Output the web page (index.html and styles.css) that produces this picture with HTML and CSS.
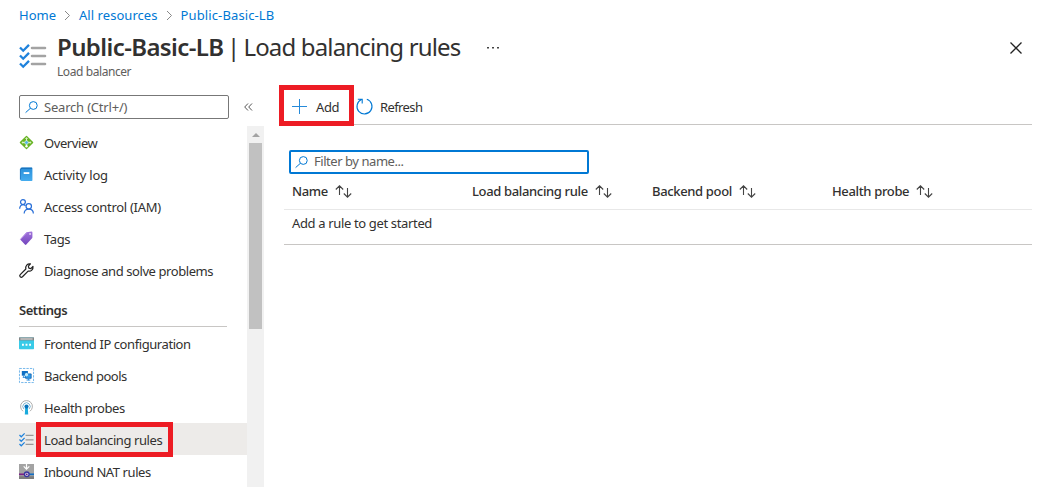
FILE: index.html
```html
<!DOCTYPE html>
<html lang="en">
<head>
<meta charset="utf-8">
<title>Public-Basic-LB | Load balancing rules</title>
<link rel="stylesheet" href="styles.css">
</head>
<body>
<nav class="breadcrumb">
  <a class="crumb crumb-home">Home</a>
  <svg class="chev" viewBox="0 0 7 11"><path d="M1 1l4.500 4.500L1 10"/></svg>
  <a class="crumb crumb-all">All resources</a>
  <svg class="chev" viewBox="0 0 7 11"><path d="M1 1l4.500 4.500L1 10"/></svg>
  <a class="crumb">Public-Basic-LB</a>
</nav>
<header class="header">
  <svg class="header-icon" viewBox="0 0 28 26"><g stroke="#a3a3a3" stroke-width="2.600" stroke-linecap="round"><path d="M13 5h13M13 13h13M13 21h13"/></g><g fill="none" stroke="#1f82dc" stroke-width="2.300"><path d="M1 4.500l3.200 3.200 5.800-5.800M1 12.500l3.200 3.200 5.800-5.800M1 20.500l3.200 3.200 5.800-5.800"/></g></svg>
  <div class="heading">
    <h1 class="title"><b class="title-name">Public-Basic-LB</b><span class="title-bar">|</span><span class="title-page">Load balancing rules</span></h1>
    <p class="subtitle">Load balancer</p>
  </div>
  <svg class="more" viewBox="0 0 12 3"><path fill="#444" d="M0 1h2v1.500H0zM5 1h2v1.500H5zM10 1h2v1.500h-2z"/></svg>
  <svg class="close" viewBox="0 0 12 12"><path d="M.5.5l11 11M11.500.5l-11 11"/></svg>
</header>
<div class="body">
  <aside class="sidebar">
    <div class="search-row">
      <div class="field search"><svg class="mag" viewBox="0 0 13 12"><circle cx="8.300" cy="4.500" r="3.900"/><path d="M5.400 7.300L.6 11.600"/></svg><span class="search-text">Search (Ctrl+/)</span></div>
      <svg class="collapse" viewBox="0 0 9 8"><path d="M4 .5L.7 4 4 7.500M8 .5L4.700 4 8 7.500"/></svg>
    </div>
    <div class="menu-wrap">
      <div class="menu">
        <a class="item"><svg class="ico" viewBox="0 0 16 16"><rect x="2.700" y="2.700" width="10.600" height="10.600" rx=".7" transform="rotate(45 8 8)" fill="#67b324"/><path d="M8 3v9M4 8h8" stroke="#e4f5d4" stroke-width="1"/><path d="M6.300 4.300L8 2.300l1.700 2M4.500 6.300L2.600 8l1.900 1.700M11.500 6.300L13.400 8l-1.900 1.700" fill="#d8f0c0"/><circle cx="8" cy="8" r="2" fill="#50b3e8" stroke="#d9f2c2" stroke-width=".8"/><circle cx="8" cy="12" r="1.300" fill="#fff"/></svg><span class="label t-overview">Overview</span></a>
        <a class="item"><svg class="ico" viewBox="0 0 16 16"><defs><linearGradient id="book" x2="0" y2="1"><stop stop-color="#2a8fda"/><stop offset="1" stop-color="#45acee"/></linearGradient></defs><path d="M3 .5h10.500a.8.8 0 0 1 .8.8v12.900a.8.8 0 0 1-.8.8H3a1.500 1.500 0 0 1-1.500-1.500V2A1.500 1.500 0 0 1 3 .5z" fill="url(#book)"/><path d="M2 2.500Q2 1.300 3.200 1.300h10.600" fill="none" stroke="#1266b0"/><path d="M1.500 2v11.500" stroke="#1674c4"/><path d="M5 5.500h6v2H5z" fill="#fff"/></svg><span class="label t-activity">Activity log</span></a>
        <a class="item"><svg class="ico" viewBox="0 0 16 16"><g fill="none" stroke="#2a70d8" stroke-width="1.300"><circle cx="4.200" cy="3.300" r="2.600"/><path d="M.7 10.500C.7 8 2.200 6.100 4.300 6.100c1.200 0 2 .4 2.600 1.100"/><circle cx="10.400" cy="7.800" r="2.900"/><path d="M5.500 15.500c0-3 2-4.800 4.900-4.800s4.900 1.800 4.900 4.800"/></g></svg><span class="label t-access">Access control (IAM)</span></a>
        <a class="item"><svg class="ico" viewBox="0 0 16 16"><defs><linearGradient id="tag" x2="0" y2="1"><stop stop-color="#a276dc"/><stop offset="1" stop-color="#7344bd"/></linearGradient></defs><path d="M8 1.200l5.300-.7q1 0 1 1v5.200q0 .6-.4 1L7.800 14.500q-.8.7-1.500 0L1.800 9.700q-.6-.7 0-1.400z" fill="url(#tag)"/><path d="M1.500 9L8 2.300" stroke="#b58ae8"/><circle cx="11.800" cy="3.200" r="1" fill="#e7d7f7"/></svg><span class="label t-tags">Tags</span></a>
        <a class="item"><svg class="ico" viewBox="0 0 16 16"><path d="M1.300 14.700q-1.100-1.200 0-2.300l6-6C6.500 3.200 9 .4 12.200 1L10 3.400l.5 2.100 2.100.5 2.300-2.300c.5 3.200-2 5.600-5.200 4.900l-6 6.100q-1.200 1.100-2.400 0z" fill="none" stroke="#222" stroke-width="1.300" stroke-linejoin="round"/></svg><span class="label t-diagnose">Diagnose and solve problems</span></a>
        <h2 class="group">Settings</h2>
        <a class="item"><svg class="ico" viewBox="0 0 16 16"><rect x="0" y="1.500" width="16" height="12.500" rx=".7" fill="#38cbe8"/><path d="M0 1.500h16v3.200H0z" fill="#858585"/><path d="M1.500 3.200H14.500" stroke="#eee"/><path d="M3.200 8.300h2v2h-2zM7 8.300h2v2H7zM10.800 8.300h2v2h-2z" fill="#fff"/></svg><span class="label t-frontend">Frontend IP configuration</span></a>
        <a class="item"><svg class="ico" viewBox="0 0 16 16"><rect x=".5" y=".5" width="15" height="15" fill="#fff" stroke="#6fb4ea" stroke-width="1" stroke-dasharray="2.500 1.200"/><path d="M3 3.200h6.500v5H3z" fill="#0f6fc4"/><path d="M5 8v2M4 10h3" stroke="#258adf"/><path d="M7 6.300h6v4.700H7z" fill="#319bea" stroke="#075ca9" stroke-width=".8"/><path d="M10 11v2M8 12.800h4" stroke="#258adf"/><path d="M6.300 6l1.700-1 1.700 1v2L8 9 6.300 8z" fill="#bdeafa"/></svg><span class="label t-backend">Backend pools</span></a>
        <a class="item"><svg class="ico" viewBox="0 0 16 16"><g fill="none" stroke="#aaa" stroke-width="1"><path d="M4.300 12A6.300 6.300 0 1 1 11.700 12"/><path d="M5.300 9.700A3.900 3.900 0 1 1 10.700 9.700" stroke="#7ab2cf"/></g><path d="M6.600 8h2.800l.4 7.500H6.200z" fill="#19aadc"/><circle cx="8" cy="7" r="2.200" fill="#0873bd"/></svg><span class="label t-health">Health probes</span></a>
        <a class="item selected"><svg class="ico" viewBox="0 0 16 16"><path d="M7 3.500H15.500M7 8.500H15.500M7 13.300H15.500" stroke="#999" stroke-width="1.300"/><path d="M.5 3.200l1.900 1.900L6 1.500M.5 8l1.900 1.900L6 6.300M.5 12.800l1.900 1.900L6 11.100" fill="none" stroke="#1f82dc" stroke-width="1.300"/></svg><span class="label t-load">Load balancing rules</span><i class="mark mark-rules"></i></a>
        <a class="item"><svg class="ico" viewBox="0 0 16 16"><path d="M0 0h16v16H0z" fill="#a3a3a3"/><path d="M0 13h16v3H0z" fill="#7d7d7d"/><path d="M8 0v5M5 2.500L8 5.500 11 2.500" fill="none" stroke="#fff" stroke-width="1.300"/><path d="M0 11h6" stroke="#7d2187" stroke-width="1.800"/><path d="M10.500 11H16" stroke="#126fc5" stroke-width="1.800"/><circle cx="8.300" cy="11" r="2.500" fill="#d8d8e8" stroke="#3a35a0" stroke-width="1.400"/><circle cx="8.300" cy="11" r=".9" fill="#651582"/></svg><span class="label t-nat">Inbound NAT rules</span></a>
      </div>
      <div class="scrollbar"><svg class="scroll-up" viewBox="0 0 8 4"><path d="M0 4l4-4 4 4z" fill="#a3a3a3"/></svg><div class="thumb"></div></div>
    </div>
  </aside>
  <main class="main">
    <div class="toolbar">
      <button class="cmd add"><svg class="plus" viewBox="0 0 15 15"><path d="M7.500 0v15M0 7.500h15"/></svg><span class="t-add">Add</span><i class="mark mark-add"></i></button>
      <button class="cmd"><svg class="refresh" viewBox="0 0 17 17"><path d="M10.800 1.300a7.500 7.500 0 1 1-5.400.3M1.800 1.200h4.400v4.400"/></svg><span class="t-refresh">Refresh</span></button>
    </div>
    <div class="field filter"><svg class="mag" viewBox="0 0 13 12"><circle cx="8.300" cy="4.500" r="3.900"/><path d="M5.400 7.300L.6 11.600"/></svg><span class="filter-text">Filter by name...</span></div>
    <div class="table">
      <div class="thead">
        <div class="th"><span class="h-name">Name</span><svg class="sort" viewBox="0 0 17 13"><path d="M4.500 10V.8M.8 4.500L4.500.8l3.700 3.700M12.500 3v9.200M8.800 8.500l3.700 3.700 3.700-3.700"/></svg></div>
        <div class="th"><span class="h-rule">Load balancing rule</span><svg class="sort" viewBox="0 0 17 13"><path d="M4.500 10V.8M.8 4.500L4.500.8l3.700 3.700M12.500 3v9.200M8.800 8.500l3.700 3.700 3.700-3.700"/></svg></div>
        <div class="th"><span class="h-pool">Backend pool</span><svg class="sort" viewBox="0 0 17 13"><path d="M4.500 10V.8M.8 4.500L4.500.8l3.700 3.700M12.500 3v9.200M8.800 8.500l3.700 3.700 3.700-3.700"/></svg></div>
        <div class="th"><span class="h-probe">Health probe</span><svg class="sort" viewBox="0 0 17 13"><path d="M4.500 10V.8M.8 4.500L4.500.8l3.700 3.700M12.500 3v9.200M8.800 8.500l3.700 3.700 3.700-3.700"/></svg></div>
      </div>
      <div class="empty"><span class="t-empty">Add a rule to get started</span></div>
    </div>
  </main>
</div>
</body>
</html>
```
FILE: styles.css
```css
* { box-sizing: border-box; }
body { margin: 0; width: 1051px; height: 487px; overflow: hidden; background: #fff; color: #323130; font: 13px/18px "Noto Sans", "Open Sans", sans-serif; letter-spacing: -0.42px; white-space: nowrap; }
svg { display: block; flex: none; overflow: visible; }
.breadcrumb { display: flex; align-items: center; height: 30px; padding-left: 19px; color: #0078d4; letter-spacing: 0.12px; }
.crumb-home { letter-spacing: 0; }
.crumb-all { letter-spacing: 0.05px; }
.chev { width: 7px; height: 11px; margin: 0 8px; fill: none; stroke: #888; }
.header { display: flex; height: 65px; padding-left: 19px; }
.header-icon { width: 28px; height: 26px; margin-top: 13px; }
.heading { margin-left: 10px; width: 404px; }
.title { display: flex; margin: 0; padding-top: 1px; font-size: 24px; line-height: 32px; font-weight: 400; letter-spacing: -0.84px; }
.title-name { font-weight: 600; letter-spacing: -0.6px; }
.title-bar { margin: 0 4px 0 3.500px; }
.subtitle { margin: 0; padding-top: 1px; font-size: 12px; line-height: 16px; color: #605e5c; }
.more { width: 12px; height: 3px; margin: 16px 0 0 26px; }
.close { width: 12px; height: 12px; margin: 12px 0 0 511px; fill: none; stroke: #222; stroke-width: 1.3; }
.body { display: flex; height: 392px; }
.sidebar { width: 264px; }
.search-row { display: flex; align-items: center; height: 24px; padding-left: 19px; margin-bottom: 7px; }
.field { display: flex; align-items: center; height: 24px; border: 1px solid #777; border-radius: 2px; color: #605e5c; }
.search { width: 210px; padding-left: 5px; }
.search-text { letter-spacing: -0.2px; }
.mag { width: 13px; height: 12px; margin-right: 6px; fill: none; stroke: #0078d4; }
.collapse { width: 9px; height: 8px; margin-left: 15px; fill: none; stroke: #555; }
.menu-wrap { display: flex; height: 361px; }
.menu { width: 247px; }
.item { position: relative; display: flex; align-items: center; height: 32px; padding: 1px 0 0 19px; }
.selected { background: #edebe9; }
.ico { width: 15px; height: 15px; margin-right: 10px; }
.label { padding-top: 1px; }
.t-activity { letter-spacing: -0.22px; }
.t-access { letter-spacing: -0.3px; }
.t-backend { letter-spacing: -0.47px; }
.group { display: flex; align-items: flex-end; width: 208px; height: 41px; margin: 0 0 0 19px; padding-bottom: 7px; border-bottom: 1px solid #c8c6c4; font-size: 13px; line-height: 18px; font-weight: 600; letter-spacing: -0.45px; }
.mark { position: absolute; border: 5px solid #ed1c24; }
.mark-rules { left: 36px; top: -1px; width: 137px; height: 35px; z-index: 1; }
.mark-add { left: -5px; top: -10px; width: 75px; height: 41px; }
.scrollbar { display: flex; flex-direction: column; align-items: center; width: 17px; background: #f1f1f1; }
.scroll-up { width: 8px; height: 4px; margin: 7px 0 6px; }
.thumb { width: 13px; height: 186px; background: #c1c1c1; }
.main { width: 768px; padding-left: 20px; }
.toolbar { display: flex; align-items: center; height: 30px; padding-bottom: 5px; border-bottom: 1px solid #c8c6c4; }
.cmd { position: relative; display: flex; align-items: center; height: 24px; margin: 0; padding: 0; border: 0; background: none; font: inherit; letter-spacing: inherit; color: inherit; }
.add { width: 72px; padding-left: 8px; }
.t-refresh { letter-spacing: -0.6px; }
.plus { width: 15px; height: 15px; margin: -1px 9px 0 0; fill: none; stroke: #258ada; }
.refresh { width: 17px; height: 17px; margin: -2px 7px 0 0; fill: none; stroke: #0078d4; stroke-width: 1.1; }
.filter { width: 300px; margin: 25px 0 0 5px; padding-left: 4px; border: 2px solid #0078d4; }
.filter-text { margin-top: -2px; letter-spacing: -0.45px; }
.table { border-bottom: 1px solid #c8c6c4; }
.thead { display: grid; grid-template-columns: repeat(4, 180px); height: 36px; padding-left: 8px; border-bottom: 1px solid #e8e8e8; font-weight: 500; letter-spacing: -0.35px; }
.th { display: flex; align-items: center; height: 34px; }
.sort { width: 17px; height: 13px; margin-left: 7px; fill: none; stroke: #444; stroke-width: 1.1; }
.empty { height: 34px; padding: 4px 8px; letter-spacing: -0.35px; }
```
